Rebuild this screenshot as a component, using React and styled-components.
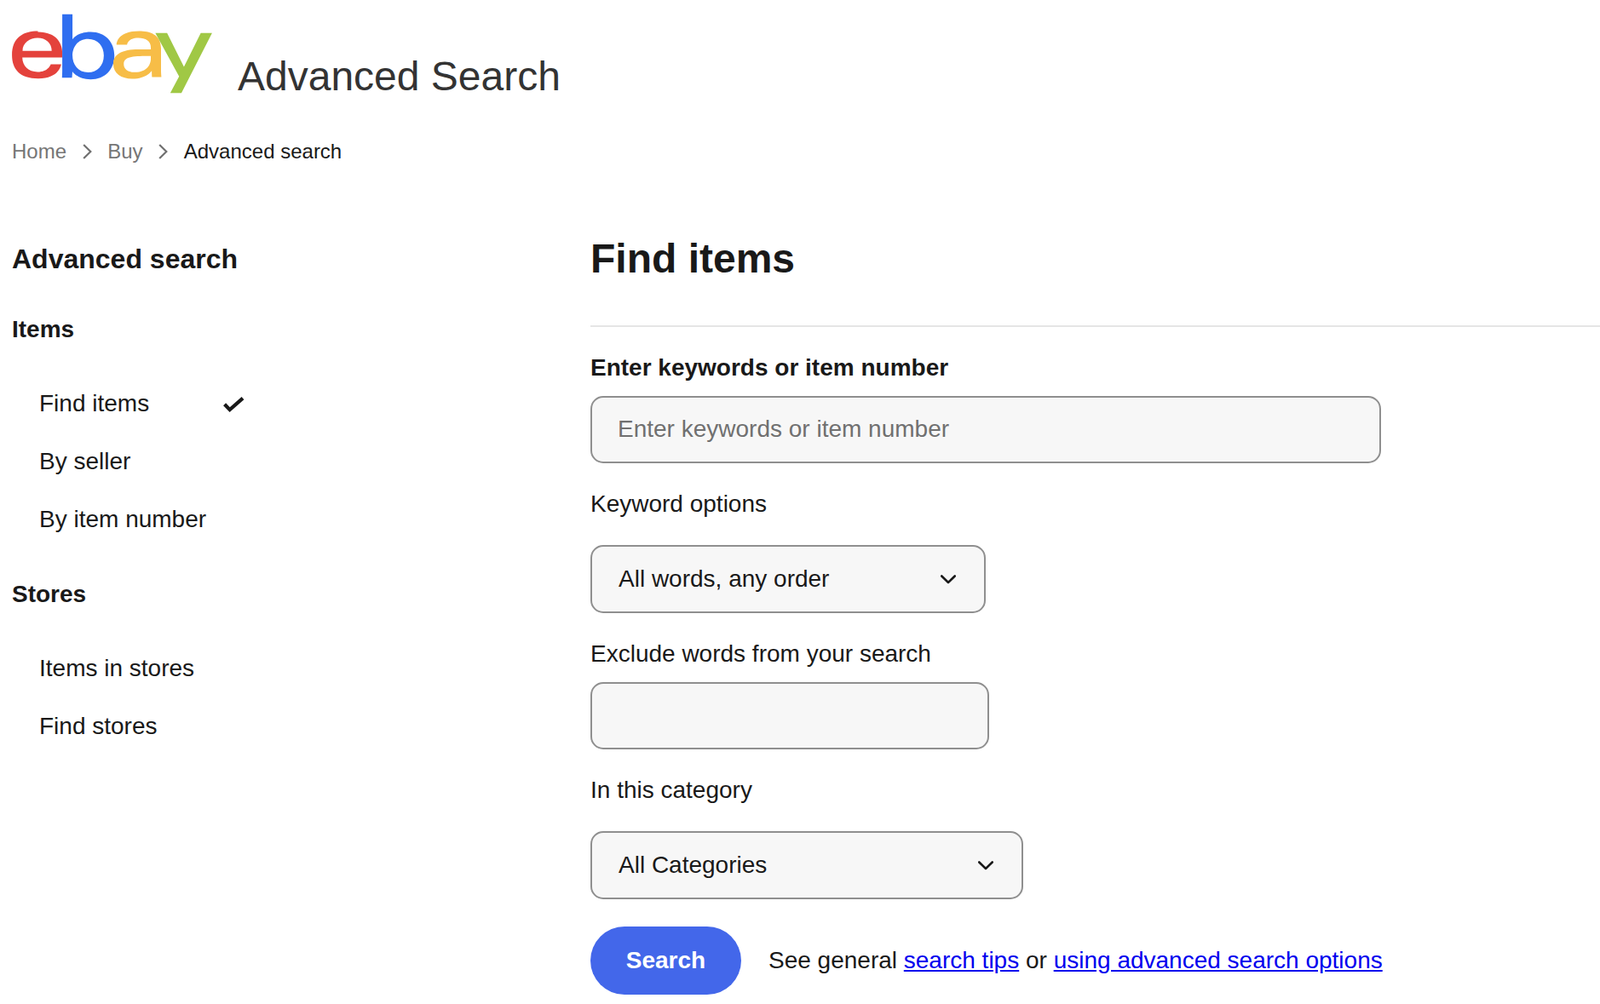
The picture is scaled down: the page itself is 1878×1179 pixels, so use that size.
import styled, { createGlobalStyle } from "styled-components";

const GlobalStyle = createGlobalStyle`
  * {
    box-sizing: border-box;
  }

  body {
    margin: 0;
    background: #fff;
    color: #191919;
    font-family: "Liberation Sans", Arial, sans-serif;
  }
`;

const Page = styled.div`
  height: 1179px;
  overflow: hidden;
  padding-left: 14px;
`;

const Header = styled.header`
  display: flex;
  gap: 30px;
  padding-top: 16px;
`;

const Logo = styled.svg`
  display: block;
  width: 235px;
  height: 94px;
`;

const Title = styled.div`
  margin-top: 46px;
  color: #333;
  font-size: 48px;
  line-height: 56px;
`;

const Breadcrumbs = styled.nav`
  display: flex;
  align-items: center;
  gap: 18.6px;
  margin-top: 44px;
  font-size: 24px;
  line-height: 32px;
`;

const Crumb = styled.a`
  color: ${(p) => (p.$current ? "#191919" : "#767676")};
`;

const Columns = styled.div`
  display: flex;
  margin-top: 82px;
`;

const Sidebar = styled.aside`
  flex: none;
  width: 679px;
  padding-top: 8px;
`;

const SidebarTitle = styled.h2`
  margin: 0 0 47px;
  font-size: 32px;
  line-height: 40px;
`;

const SectionTitle = styled.h3`
  margin: 0 0 55px;
  font-size: 28px;
  line-height: 32px;
`;

const NavList = styled.ul`
  display: flex;
  flex-direction: column;
  gap: 36px;
  margin: 0 0 56px;
  padding: 0 0 0 32px;
  list-style: none;
`;

const NavItem = styled.li`
  display: flex;
  justify-content: space-between;
  align-items: center;
  width: 241px;
  font-size: 28px;
  line-height: 32px;
`;

const Content = styled.main`
  flex: 1;
  min-width: 0;
`;

const Heading = styled.h1`
  margin: 0;
  padding-bottom: 50px;
  border-bottom: 2px solid #e5e5e5;
  font-size: 48px;
  line-height: 56px;
`;

const FieldLabel = styled.label`
  display: block;
  margin-top: ${(p) => p.$top}px;
  margin-bottom: ${(p) => p.$bottom}px;
  font-size: 28px;
  font-weight: ${(p) => (p.$strong ? 700 : 400)};
  line-height: 32px;
`;

const TextInput = styled.input`
  display: block;
  width: ${(p) => p.$width}px;
  height: 79px;
  padding: 0 30px 2px;
  border: 2px solid #8f8f8f;
  border-radius: 15px;
  background: #f7f7f7;
  color: #191919;
  font-family: inherit;
  font-size: 28px;

  &::placeholder {
    color: #707070;
    opacity: 1;
  }
`;

const SelectBox = styled.div`
  display: flex;
  justify-content: space-between;
  align-items: center;
  width: ${(p) => p.$width}px;
  height: 80px;
  padding: 0 33px 0 31px;
  border: 2px solid #8f8f8f;
  border-radius: 15px;
  background: #f7f7f7;
  font-size: 28px;
`;

const ActionRow = styled.div`
  display: flex;
  align-items: center;
  gap: 32px;
  margin-top: 32px;
  font-size: 28px;
`;

const SearchButton = styled.button`
  width: 177px;
  height: 80px;
  border: none;
  border-radius: 40px;
  background: #4367ea;
  color: #fff;
  font-family: inherit;
  font-size: 28px;
  font-weight: 700;
`;

const HelpLink = styled.a`
  color: #0000ee;
  text-decoration: underline;
`;

function EbayLogo() {
  return (
    <Logo viewBox="0 0 300 120" role="img" aria-label="eBay">
      <path
        fill="#e4423c"
        d="M38.866 26.308C17.721 26.308 0.1 35.279 0.1 62.345c0 21.442 11.849 34.944 39.312 34.944 32.326 0 34.398-21.294 34.398-21.294H58.146s-3.358 11.466-19.69 11.466c-13.302 0-22.869-8.986-22.869-21.58H75.45v-7.904c0-12.46-7.91-30.669-36.583-30.669zm-.546 10.104c12.663 0 21.296 7.758 21.296 19.385H15.93c0-12.345 11.268-19.385 22.39-19.385z"
      />
      <path
        fill="#2f6ef0"
        d="M75.438 1.1v83.597c0 4.745-.339 11.408-.339 11.408h14.94s.537-4.785.537-9.159c0 0 7.381 11.548 27.451 11.548 21.134 0 35.49-14.673 35.49-35.695 0-19.557-13.186-35.286-35.456-35.286-20.854 0-27.334 11.261-27.334 11.261V1.1zm38.766 36.753c14.352 0 23.479 10.652 23.479 24.946 0 15.328-10.541 25.355-23.376 25.355-15.318 0-23.581-11.961-23.581-25.219 0-12.354 7.414-25.082 23.478-25.082z"
      />
      <path
        fill="#f7bd47"
        d="M190.645 26.308c-31.812 0-33.852 17.418-33.852 20.202h15.834s.83-10.169 16.926-10.169c10.459 0 18.564 4.788 18.564 13.991v3.276h-18.564c-24.645 0-37.674 7.21-37.674 21.84 0 14.398 12.038 22.232 28.307 22.232 22.172 0 29.314-12.251 29.314-12.251 0 4.873.376 9.676.376 9.676h14.076s-.546-5.952-.546-9.76V52.432c0-21.633-17.449-26.124-32.76-26.124zm17.472 37.265v4.383c0 5.717-3.528 19.93-24.296 19.93-11.373 0-16.248-5.676-16.248-12.26 0-11.977 16.42-12.053 40.544-12.053z"
      />
      <path
        fill="#a0c845"
        d="M214.879 29.041h17.61l25.272 50.631 25.215-50.631H299.9l-45.929 90.144h-16.733l13.253-25.129z"
      />
    </Logo>
  );
}

function CrumbChevron() {
  return (
    <svg width="11" height="18" viewBox="0 0 11 18" fill="none">
      <path d="M1.2 1 9.3 9l-8.1 8" stroke="#707070" strokeWidth="2.2" />
    </svg>
  );
}

function CheckMark() {
  return (
    <svg width="25" height="20" viewBox="0 -1.5 25 20" fill="none" overflow="visible">
      <path
        d="M1.6 9.2 7.7 15.6 23 2.2"
        stroke="#191919"
        strokeWidth="4.2"
        strokeLinejoin="miter"
      />
    </svg>
  );
}

function SelectChevron() {
  return (
    <svg width="18" height="11" viewBox="0 0 18 11" fill="none">
      <path
        d="M1.3 1.5 9 9l7.7-7.5"
        stroke="#191919"
        strokeWidth="2.6"
        strokeLinecap="round"
        strokeLinejoin="round"
      />
    </svg>
  );
}

export default function App() {
  return (
    <Page>
      <GlobalStyle />
      <Header>
        <EbayLogo />
        <Title>Advanced Search</Title>
      </Header>
      <Breadcrumbs>
        <Crumb>Home</Crumb>
        <CrumbChevron />
        <Crumb>Buy</Crumb>
        <CrumbChevron />
        <Crumb $current>Advanced search</Crumb>
      </Breadcrumbs>
      <Columns>
        <Sidebar>
          <SidebarTitle>Advanced search</SidebarTitle>
          <SectionTitle>Items</SectionTitle>
          <NavList>
            <NavItem>
              Find items
              <CheckMark />
            </NavItem>
            <NavItem>By seller</NavItem>
            <NavItem>By item number</NavItem>
          </NavList>
          <SectionTitle>Stores</SectionTitle>
          <NavList>
            <NavItem>Items in stores</NavItem>
            <NavItem>Find stores</NavItem>
          </NavList>
        </Sidebar>
        <Content>
          <Heading>Find items</Heading>
          <FieldLabel $strong $top={32} $bottom={17}>
            Enter keywords or item number
          </FieldLabel>
          <TextInput $width={928} placeholder="Enter keywords or item number" />
          <FieldLabel $top={32} $bottom={32}>
            Keyword options
          </FieldLabel>
          <SelectBox $width={464}>
            All words, any order
            <SelectChevron />
          </SelectBox>
          <FieldLabel $top={32} $bottom={17}>
            Exclude words from your search
          </FieldLabel>
          <TextInput $width={468} />
          <FieldLabel $top={32} $bottom={32}>
            In this category
          </FieldLabel>
          <SelectBox $width={508}>
            All Categories
            <SelectChevron />
          </SelectBox>
          <ActionRow>
            <SearchButton>Search</SearchButton>
            <span>
              See general <HelpLink>search tips</HelpLink> or{" "}
              <HelpLink>using advanced search options</HelpLink>
            </span>
          </ActionRow>
        </Content>
      </Columns>
    </Page>
  );
}
